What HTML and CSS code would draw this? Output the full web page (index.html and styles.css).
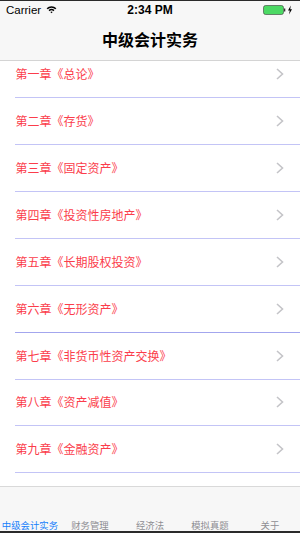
FILE: index.html
```html
<!DOCTYPE html>
<html lang="zh-CN">
<head>
<meta charset="utf-8">
<title>中级会计实务</title>
<link rel="stylesheet" href="styles.css">
</head>
<body>
<div class="screen">
  <header class="statusbar">
    <div class="sb-left">
      <span class="carrier">Carrier</span>
      <svg class="wifi" width="11" height="9" viewBox="0 0 11 9">
        <path d="M0.6 3.2 A7 7 0 0 1 10.4 3.2 L9.3 4.3 A5.4 5.4 0 0 0 1.7 4.3 Z" fill="#000"/>
        <path d="M2.5 5.1 A4.3 4.3 0 0 1 8.5 5.1 L7.4 6.2 A2.8 2.8 0 0 0 3.6 6.2 Z" fill="#000"/>
        <path d="M4.4 7.0 A1.6 1.6 0 0 1 6.6 7.0 L5.5 8.3 Z" fill="#000"/>
      </svg>
    </div>
    <span class="time">2:34 PM</span>
    <div class="sb-right">
      <svg class="battery" width="32" height="10" viewBox="0 0 32 10">
        <rect x="0.5" y="0.5" width="20" height="9" rx="2" fill="#4cd964" stroke="#3a3a3a" stroke-width="0.6"/>
        <rect x="21" y="3.5" width="1.3" height="3" fill="#333"/>
        <path d="M27.8 0.5 L25 5.4 L26.8 5.4 L26 9.5 L29 4.3 L27.2 4.3 Z" fill="#000"/>
      </svg>
    </div>
  </header>
  <div class="navbar">
    <h1 class="nav-title">中级会计实务</h1>
  </div>
  <main class="list-viewport">
    <ul class="chapter-list">
      <li class="row"><span class="row-text">第一章《总论》</span><svg class="chev" width="8" height="12" viewBox="0 0 8 12"><polyline points="1,1 6.5,6 1,11" fill="none" stroke="#c4c4c8" stroke-width="1.6"/></svg></li>
      <li class="row"><span class="row-text">第二章《存货》</span><svg class="chev" width="8" height="12" viewBox="0 0 8 12"><polyline points="1,1 6.5,6 1,11" fill="none" stroke="#c4c4c8" stroke-width="1.6"/></svg></li>
      <li class="row"><span class="row-text">第三章《固定资产》</span><svg class="chev" width="8" height="12" viewBox="0 0 8 12"><polyline points="1,1 6.5,6 1,11" fill="none" stroke="#c4c4c8" stroke-width="1.6"/></svg></li>
      <li class="row"><span class="row-text">第四章《投资性房地产》</span><svg class="chev" width="8" height="12" viewBox="0 0 8 12"><polyline points="1,1 6.5,6 1,11" fill="none" stroke="#c4c4c8" stroke-width="1.6"/></svg></li>
      <li class="row"><span class="row-text">第五章《长期股权投资》</span><svg class="chev" width="8" height="12" viewBox="0 0 8 12"><polyline points="1,1 6.5,6 1,11" fill="none" stroke="#c4c4c8" stroke-width="1.6"/></svg></li>
      <li class="row dark-sep"><span class="row-text">第六章《无形资产》</span><svg class="chev" width="8" height="12" viewBox="0 0 8 12"><polyline points="1,1 6.5,6 1,11" fill="none" stroke="#c4c4c8" stroke-width="1.6"/></svg></li>
      <li class="row"><span class="row-text">第七章《非货币性资产交换》</span><svg class="chev" width="8" height="12" viewBox="0 0 8 12"><polyline points="1,1 6.5,6 1,11" fill="none" stroke="#c4c4c8" stroke-width="1.6"/></svg></li>
      <li class="row"><span class="row-text">第八章《资产减值》</span><svg class="chev" width="8" height="12" viewBox="0 0 8 12"><polyline points="1,1 6.5,6 1,11" fill="none" stroke="#c4c4c8" stroke-width="1.6"/></svg></li>
      <li class="row"><span class="row-text">第九章《金融资产》</span><svg class="chev" width="8" height="12" viewBox="0 0 8 12"><polyline points="1,1 6.5,6 1,11" fill="none" stroke="#c4c4c8" stroke-width="1.6"/></svg></li>
    </ul>
  </main>
  <nav class="tabbar">
    <span class="tab active">中级会计实务</span>
    <span class="tab">财务管理</span>
    <span class="tab">经济法</span>
    <span class="tab">模拟真题</span>
    <span class="tab">关于</span>
  </nav>
</div>
</body>
</html>
```
FILE: styles.css
```css
* { box-sizing: border-box; }
html, body { margin: 0; padding: 0; background: #fff; }
body { font-family: "Noto Sans CJK SC", "Liberation Sans", sans-serif; }

.screen {
  width: 300px;
  height: 533px;
  display: flex;
  flex-direction: column;
  overflow: hidden;
  background: #fff;
}

.statusbar {
  height: 19px;
  flex: none;
  border-top: 1px solid #2a2a2a;
  background: #f7f7f7;
  display: grid;
  grid-template-columns: 1fr auto 1fr;
  align-items: center;
  padding: 0 6px;
  font-family: "Liberation Sans", Arial, sans-serif;
  color: #000;
}
.sb-left { display: flex; align-items: center; gap: 5px; }
.carrier { font-size: 11.5px; line-height: 12px; }
.wifi { display: block; margin-top: -1px; }
.time { font-size: 12px; font-weight: 700; line-height: 12px; }
.sb-right { display: flex; justify-content: flex-end; }
.battery { display: block; margin-right: -1px; }

.navbar {
  height: 42px;
  flex: none;
  background: #f7f7f7;
  border-bottom: 1px solid #d4d4d4;
  display: flex;
  align-items: center;
  justify-content: center;
  padding-bottom: 1px;
}
.nav-title {
  margin: 0;
  font-size: 16px;
  font-weight: 700;
  line-height: 20px;
  color: #000;
}

.list-viewport {
  flex: 1;
  overflow: hidden;
  background: #fff;
}
.chapter-list {
  list-style: none;
  margin: -9.6px 0 0 0;
  padding: 0;
}
.row {
  height: 46.875px;
  margin-left: 15px;
  padding-right: 16px;
  display: flex;
  align-items: center;
  justify-content: space-between;
  border-bottom: 1px solid #c3c4f6;
}
.row.dark-sep { border-bottom-color: #a3a6ee; }
.row-text {
  font-size: 12px;
  line-height: 14px;
  color: #fb3d4b;
  padding-left: 0.5px;
}
.chev { display: block; flex: none; }

.tabbar {
  height: 47px;
  flex: none;
  background: #f7f7f7;
  border-top: 1px solid #d9d9d9;
  border-bottom: 2px solid #2a2a2a;
  display: grid;
  grid-template-columns: repeat(5, 60px);
  align-items: end;
  padding-bottom: 0;
}
.tab {
  text-align: center;
  font-size: 9.4px;
  line-height: 11px;
  color: #8e8e93;
  white-space: nowrap;
}
.tab.active { color: #157efb; }
```
